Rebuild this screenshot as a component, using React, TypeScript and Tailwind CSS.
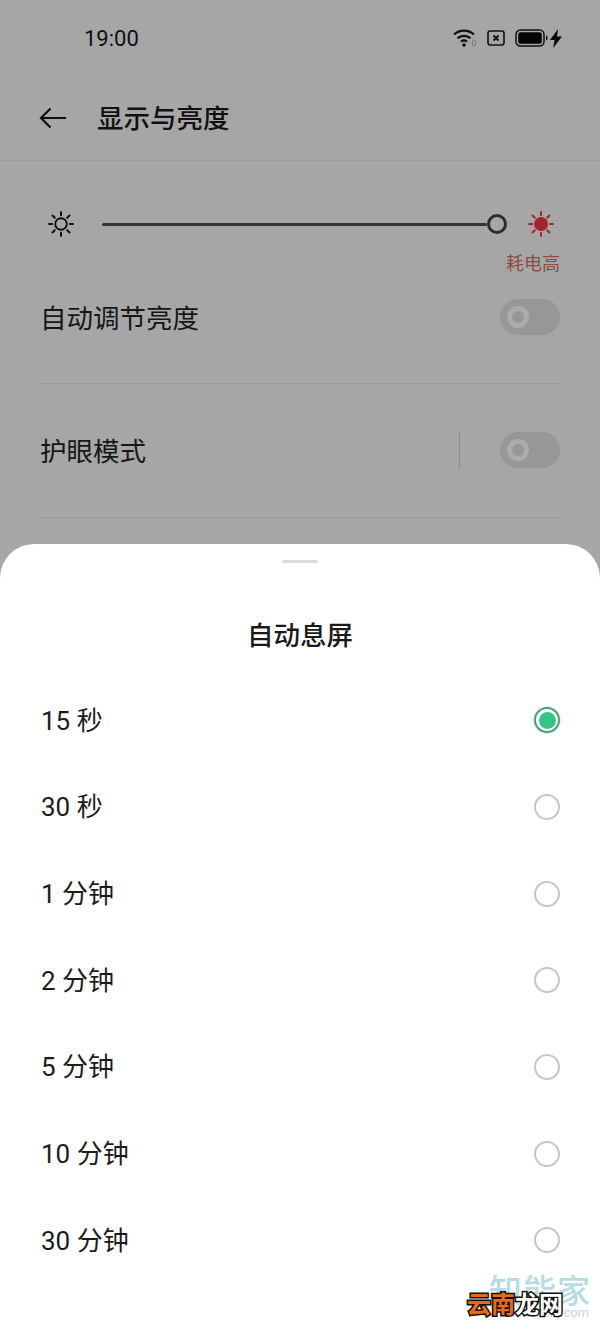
import React from "react";

const OPTIONS = ["15 秒", "30 秒", "1 分钟", "2 分钟", "5 分钟", "10 分钟", "30 分钟"];
const FONT = "font-['Roboto','Noto_Sans_CJK_SC',sans-serif]";

function Sun({ color, filled }: { color: string; filled?: boolean }) {
  const rays = [0, 45, 90, 135, 180, 225, 270, 315];
  return (
    <svg width="28" height="28" viewBox="0 0 28 28" fill="none">
      {filled ? (
        <circle cx="14" cy="14" r="7" fill={color} />
      ) : (
        <circle cx="14" cy="14" r="5.8" stroke={color} strokeWidth="1.9" />
      )}
      {rays.map((a) => (
        <line
          key={a}
          x1="14"
          y1="2"
          x2="14"
          y2="5.2"
          stroke={color}
          strokeWidth="2"
          strokeLinecap="round"
          transform={`rotate(${a} 14 14)`}
        />
      ))}
    </svg>
  );
}

function Toggle() {
  return (
    <div className="flex h-9 w-[60px] items-center rounded-full bg-[#979797] pl-[7px]">
      <div className="flex h-[22px] w-[22px] items-center justify-center rounded-full bg-[#ababab]">
        <div className="h-3 w-3 rounded-full bg-[#979797]" />
      </div>
    </div>
  );
}

function Radio({ on }: { on?: boolean }) {
  return on ? (
    <div className="-mt-px flex h-[26px] w-[26px] items-center justify-center rounded-full border-2 border-[#4d9b7c] shadow-[0_0_3px_#9be8c8]">
      <div className="h-[17px] w-[17px] rounded-full bg-[#35c486]" />
    </div>
  ) : (
    <div className="-mt-px h-[26px] w-[26px] rounded-full border-2 border-[#c6c6c6]" />
  );
}

export default function App() {
  return (
    <div className={`relative flex h-[1333px] w-[600px] flex-col overflow-hidden bg-[#a6a6a6] ${FONT}`}>
      <div className="flex h-[76px] items-center justify-between pl-[84px] pr-[38px]">
        <span className="pt-[2px] text-[22px] leading-none text-[#111]">19:00</span>
        <div className="flex items-center gap-[10px]">
          <svg width="24" height="20" viewBox="0 0 24 20" fill="none">
            <path d="M1 6.5C6.5 1.2 15.5 1.2 21 6.5" stroke="#0c0c0c" strokeWidth="2.2" />
            <path d="M4.5 10.2C8 7 14 7 17.5 10.2" stroke="#0c0c0c" strokeWidth="2.2" />
            <path d="M8 13.6C9.8 12.2 12.2 12.2 14 13.6" stroke="#0c0c0c" strokeWidth="2.2" />
            <circle cx="11" cy="17" r="1.7" fill="#0c0c0c" />
            <rect x="19.5" y="12" width="3" height="6" rx="1.5" stroke="#777" strokeWidth="1" />
          </svg>
          <svg width="18" height="16" viewBox="0 0 18 16" fill="none">
            <rect x="1" y="1" width="16" height="14" rx="2.2" stroke="#111" strokeWidth="1.6" />
            <path d="M6.5 5.5L11.5 10.5M11.5 5.5L6.5 10.5" stroke="#111" strokeWidth="1.8" />
          </svg>
          <div className="flex items-center gap-[2px]">
            <svg width="33" height="18" viewBox="0 0 33 18" fill="none">
              <rect x="1" y="1" width="28" height="16" rx="4.5" stroke="#111" strokeWidth="1.5" />
              <rect x="3.2" y="3.2" width="23.6" height="11.6" rx="2.5" fill="#050505" />
              <path d="M31 6.5C32.3 7 32.6 8 32.6 9C32.6 10 32.3 11 31 11.5Z" fill="#111" />
            </svg>
            <svg width="12" height="19" viewBox="0 0 12 19" fill="#0a0a0a">
              <path d="M8 0L0 11H4.5L3.2 19L12 7.5H7Z" />
            </svg>
          </div>
        </div>
      </div>

      <div className="flex h-[85px] items-center border-b border-[#9c9c9c] pl-[39px]">
        <svg width="28" height="22" viewBox="0 0 28 22" fill="none">
          <path d="M27 11H2M11.5 1.5L2 11L11.5 20.5" stroke="#0d0d0d" strokeWidth="2.2" />
        </svg>
        <span className="ml-[30px] pt-[3px] text-[26.5px] font-medium leading-none text-[#111]">显示与亮度</span>
      </div>

      <div className="flex items-center pl-[47px] pt-[49px]">
        <Sun color="#111" />
        <div className="ml-[27px] h-[3px] w-[385px] rounded-full bg-[#333]" />
        <div className="h-5 w-5 shrink-0 rounded-full border-[3px] border-[#2d2d2d] bg-[#a6a6a6]" />
        <div className="ml-5">
          <Sun color="#a32530" filled />
        </div>
      </div>

      <div className="flex justify-end pr-10 pt-[14px] text-lg leading-[24px] text-[#8f4b42]">耗电高</div>

      <div className="mx-10 flex h-[108px] items-center justify-between border-b border-[#999] pb-[28px] pt-[2px]">
        <span className="pt-[5px] text-[26.5px] leading-none text-[#161616]">自动调节亮度</span>
        <Toggle />
      </div>

      <div className="mx-10 flex h-[134px] items-center justify-between border-b border-[#999] pb-[2px]">
        <span className="pt-[6px] text-[26.5px] leading-none text-[#161616]">护眼模式</span>
        <div className="flex items-center">
          <div className="mr-10 h-9 w-px bg-[#8a8a8a]" />
          <Toggle />
        </div>
      </div>

      <div className="absolute inset-x-0 bottom-0 top-[544px] rounded-t-[34px] bg-white">
        <div className="mx-auto mt-4 h-[3px] w-9 rounded-full bg-[#dcdcdc]" />
        <h1 className="mt-[60px] text-center text-[26.5px] font-medium leading-none text-[#1a1a1a]">自动息屏</h1>
        <div className="mt-[28px] flex flex-col px-10">
          {OPTIONS.map((o, i) => (
            <div key={o} className="flex h-[86.67px] items-center justify-between">
              <span className="pl-px text-[26px] leading-none text-[#1c1c1c]">{o}</span>
              <Radio on={i === 0} />
            </div>
          ))}
        </div>
      </div>

      <div className="absolute bottom-[14px] right-[9px] leading-none">
        <div className="text-[33px] font-medium tracking-[1px] text-[#b9dce2]">知能家</div>
        <div className="-mt-[2px] pr-[2px] text-right text-[13px] text-[#c8d8e0]">www.znj.com</div>
      </div>
      <div className="absolute left-[467px] top-[1293px] text-[24px] font-bold leading-none [-webkit-text-stroke:3px_#111] [paint-order:stroke_fill]">
        <span className="text-[#e96a12]">云南</span>
        <span className="text-white">龙网</span>
      </div>
    </div>
  );
}
